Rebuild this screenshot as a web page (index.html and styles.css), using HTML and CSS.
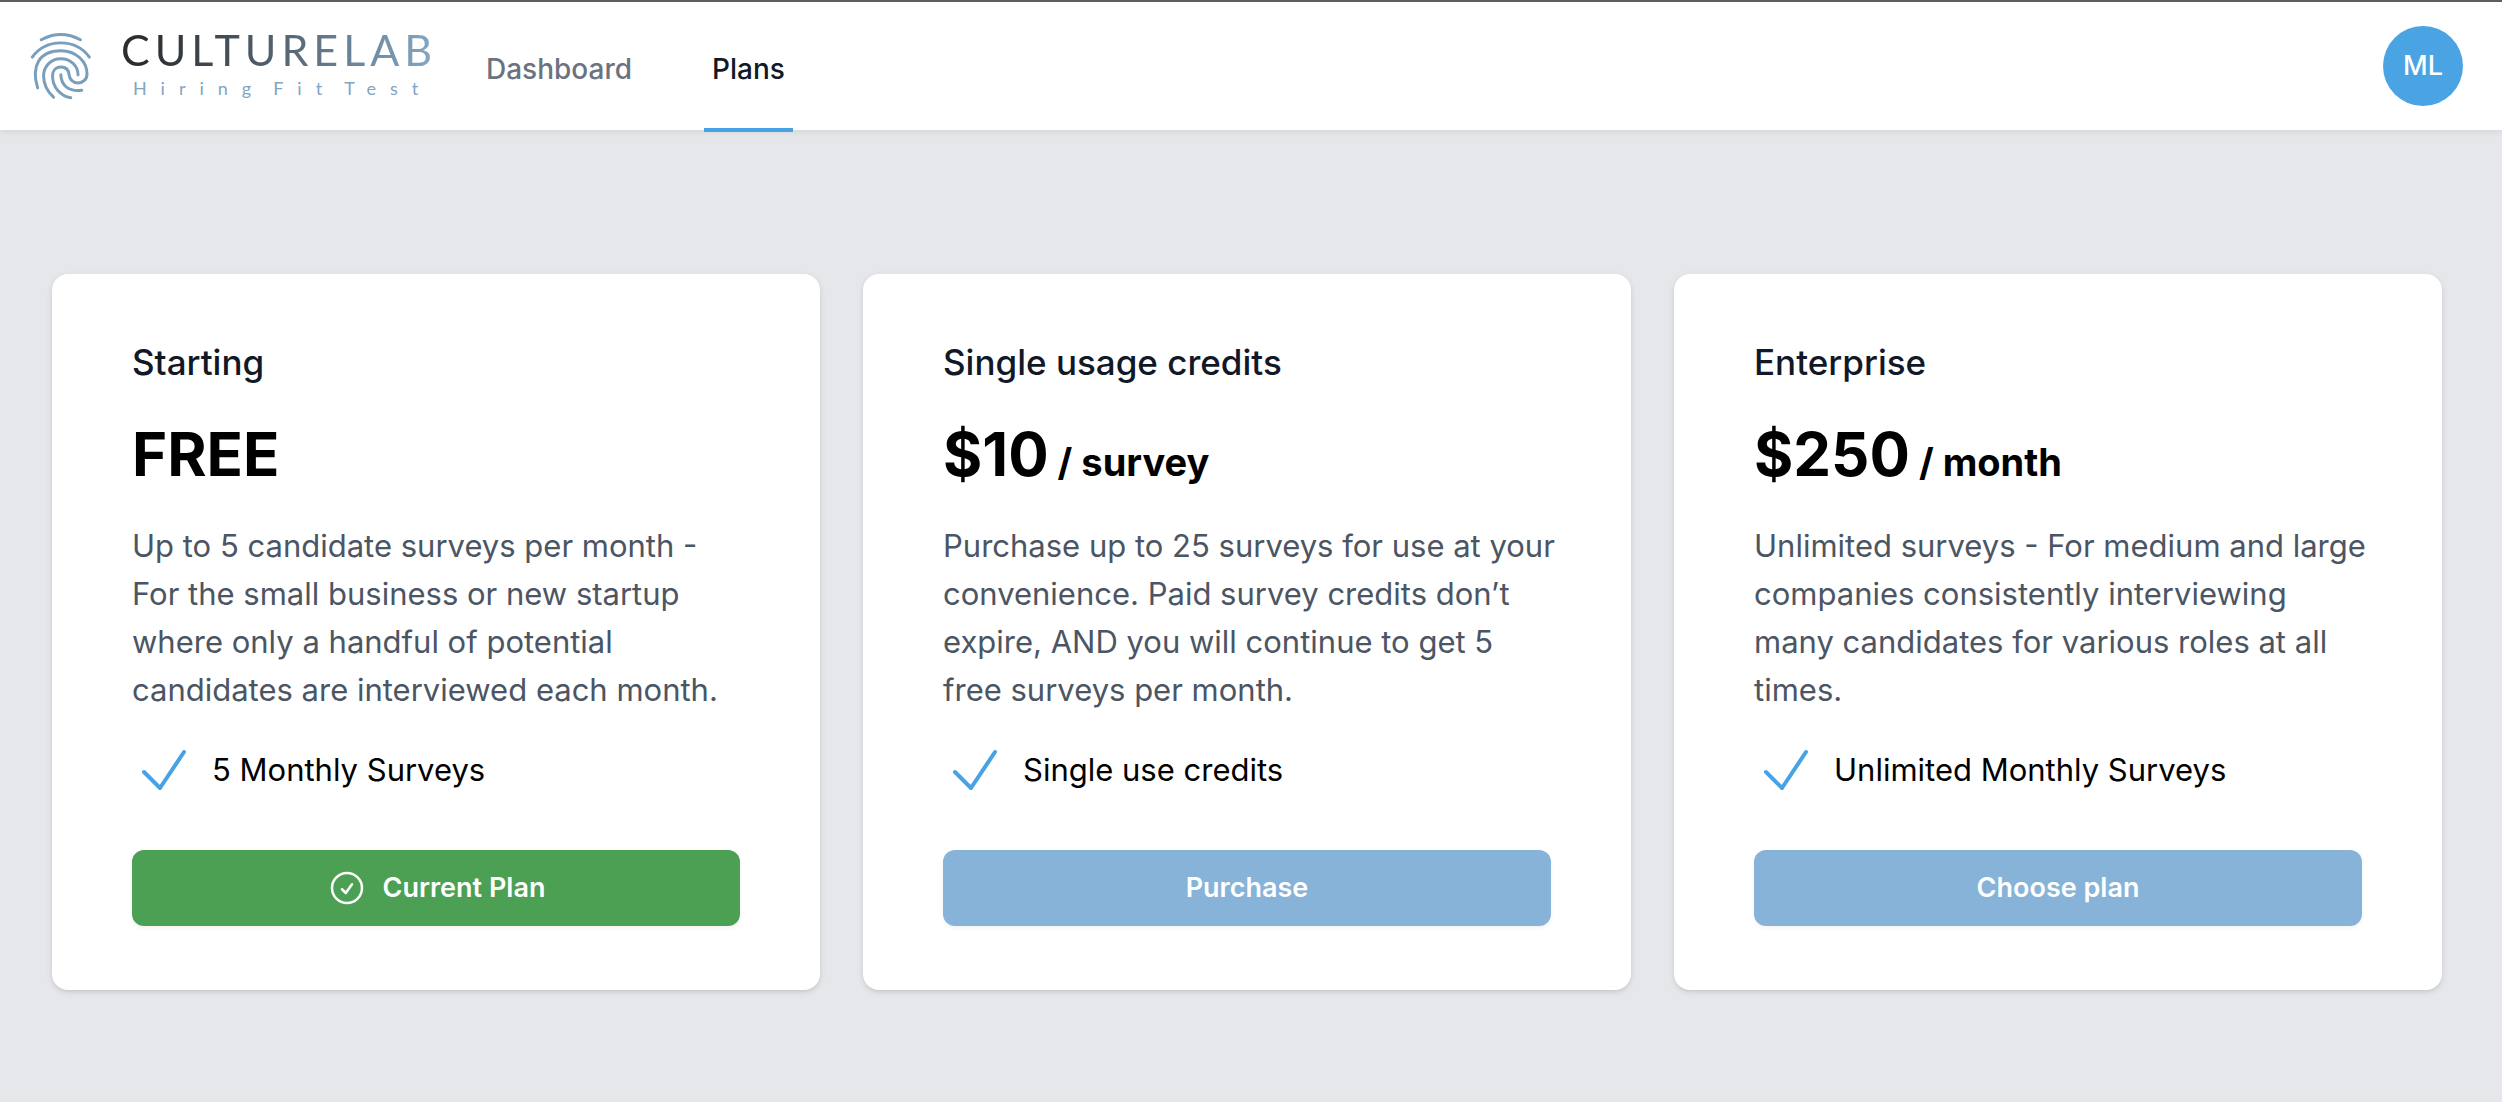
FILE: index.html
```html
<!DOCTYPE html>
<html lang="en">
<head>
<meta charset="utf-8">
<title>CultureLab – Plans</title>
<meta name="viewport" content="width=device-width, initial-scale=1">
<link rel="stylesheet" href="styles.css">
</head>
<body>
<header class="topbar">
  <a class="brand" href="#">
    <svg class="brand-mark" viewBox="90 93 184 204" aria-hidden="true">
      <path d="M124 116Q183 84 242 116"/>
      <path d="M97 168C139 111 227 111 269 168"/>
      <path d="M113 261C93 196 117 149 183 149C230 149 262 182 262 219C262 235 250 246 235 246C220 246 209 235 208 222C207 206 197 198 183 198C168 198 158 209 158 225C158 260 182 285 213 291"/>
      <path d="M161 289C142 271 131 247 131 225C131 195 154 173 183 173C213 173 235 195 235 222"/>
      <path d="M183 221C184 256 209 273 246 268"/>
    </svg>
    <span class="brand-text">
      <span class="brand-name">CULTURELAB</span>
      <span class="brand-tag"><span>Hiring</span> <span>Fit</span> <span>Test</span></span>
    </span>
  </a>
  <nav class="nav">
    <a class="nav-link" href="#">Dashboard</a>
    <a class="nav-link nav-link-active" href="#" aria-current="page">Plans</a>
  </nav>
  <button class="avatar" type="button" aria-label="ML account menu">ML</button>
</header>
<main class="plans">
  <section class="card">
    <h2 class="card-title">Starting</h2>
    <p class="price">FREE</p>
    <p class="blurb">Up to 5 candidate surveys per month - For the small business or new startup where only a handful of potential candidates are interviewed each month.</p>
    <ul class="features">
      <li class="feature"><svg class="check" viewBox="0 0 24 24" aria-hidden="true"><path d="M4.5 12.75l6 6 9-13.5"/></svg>5 Monthly Surveys</li>
    </ul>
    <button class="btn btn-current" type="button"><svg class="btn-icon" viewBox="0 0 24 24" aria-hidden="true"><path d="M9 12.75L11.25 15 15 9.75M21 12a9 9 0 11-18 0 9 9 0 0118 0z"/></svg>Current Plan</button>
  </section>
  <section class="card">
    <h2 class="card-title">Single usage credits</h2>
    <p class="price">$10<span class="per"> / survey</span></p>
    <p class="blurb">Purchase up to 25 surveys for use at your convenience. Paid survey credits don’t expire, AND you will continue to get 5 free surveys per month.</p>
    <ul class="features">
      <li class="feature"><svg class="check" viewBox="0 0 24 24" aria-hidden="true"><path d="M4.5 12.75l6 6 9-13.5"/></svg>Single use credits</li>
    </ul>
    <button class="btn" type="button">Purchase</button>
  </section>
  <section class="card">
    <h2 class="card-title">Enterprise</h2>
    <p class="price">$250<span class="per"> / month</span></p>
    <p class="blurb">Unlimited surveys - For medium and large companies consistently interviewing many candidates for various roles at all times.</p>
    <ul class="features">
      <li class="feature"><svg class="check" viewBox="0 0 24 24" aria-hidden="true"><path d="M4.5 12.75l6 6 9-13.5"/></svg>Unlimited Monthly Surveys</li>
    </ul>
    <button class="btn" type="button">Choose plan</button>
  </section>
</main>
</body>
</html>
```
FILE: styles.css
```css
* { box-sizing: border-box; }

body {
  margin: 0;
  min-height: 100vh;
  background: #e5e7eb;
  color: #000;
  font-family: Inter, "Liberation Sans", sans-serif;
  font-size: 31px;
  line-height: 48px;
}

h2, p, ul { margin: 0; padding: 0; }
a { text-decoration: none; }
svg { fill: none; stroke: currentColor; stroke-linecap: round; stroke-linejoin: round; flex: none; }

.topbar {
  display: flex;
  align-items: center;
  height: 130px;
  padding: 0 39px 0 30px;
  border-top: 2px solid #5f5d63;
  background: #fff;
  box-shadow: 0 2px 6px rgba(0, 0, 0, .08);
}

.brand { display: flex; align-items: center; gap: 30px; }
.brand-mark { width: 61px; height: 68px; color: #7a9fba; stroke-width: 9; }
.brand-text { display: flex; flex-direction: column; gap: 8px; width: 320px; }
.brand-name {
  font-family: Lato, sans-serif;
  font-size: 43px;
  line-height: 36px;
  letter-spacing: 5px;
  white-space: nowrap;
  color: transparent;
  background: linear-gradient(90deg, #2b2d30 8%, #5a6b7b 55%, #86abc8);
  -webkit-background-clip: text;
  background-clip: text;
}
.brand-tag {
  display: flex;
  gap: 8px;
  padding-left: 12px;
  font-family: Lato, sans-serif;
  font-size: 18px;
  line-height: 24px;
  letter-spacing: 14px;
  white-space: nowrap;
  color: #7fa5c4;
}

.nav { display: flex; align-self: stretch; gap: 64px; margin: 0 auto 0 37px; }
.nav-link {
  display: flex;
  align-items: center;
  height: 130px;
  padding: 8px 8px 0;
  border-bottom: 4px solid transparent;
  font-size: 28px;
  font-weight: 500;
  color: #6b7280;
}
.nav-link-active { color: #111827; border-color: #48a2e3; }

.avatar {
  width: 80px;
  height: 80px;
  padding: 0;
  border: 0;
  border-radius: 50%;
  background: #4aa3e2;
  color: #fff;
  font: 500 27px/40px Inter, sans-serif;
}

.plans {
  display: grid;
  grid-template-columns: repeat(3, 1fr);
  gap: 43px;
  padding: 144px 60px 112px 52px;
}

.card {
  display: flex;
  flex-direction: column;
  padding: 64px 80px;
  border-radius: 16px;
  background: #fff;
  box-shadow: 0 2px 6px rgba(0, 0, 0, .1), 0 2px 4px -2px rgba(0, 0, 0, .1);
}
.card-title { font-size: 35px; line-height: 48px; font-weight: 500; color: #111827; }
.price { margin: 32px 0; font-size: 60px; line-height: 72px; font-weight: 700; }
.per { font-size: 38px; line-height: 40px; }
.blurb { margin-right: -8px; color: #4b5563; }
.features { margin: 24px 0 48px; list-style: none; }
.feature { display: flex; align-items: center; gap: 16px; }
.check { width: 64px; height: 64px; color: #48a2e3; stroke-width: 1.5; }

.btn {
  display: flex;
  align-items: center;
  justify-content: center;
  gap: 16px;
  height: 76px;
  margin-top: auto;
  padding: 0 24px;
  border: 0;
  border-radius: 12px;
  background: #87b3d9;
  color: #fff;
  font: 600 27px/40px Inter, sans-serif;
  box-shadow: 0 2px 4px rgba(0, 0, 0, .05);
}
.btn-current { background: #4ca054; }
.btn-icon { width: 40px; height: 40px; stroke-width: 1.5; }
```
